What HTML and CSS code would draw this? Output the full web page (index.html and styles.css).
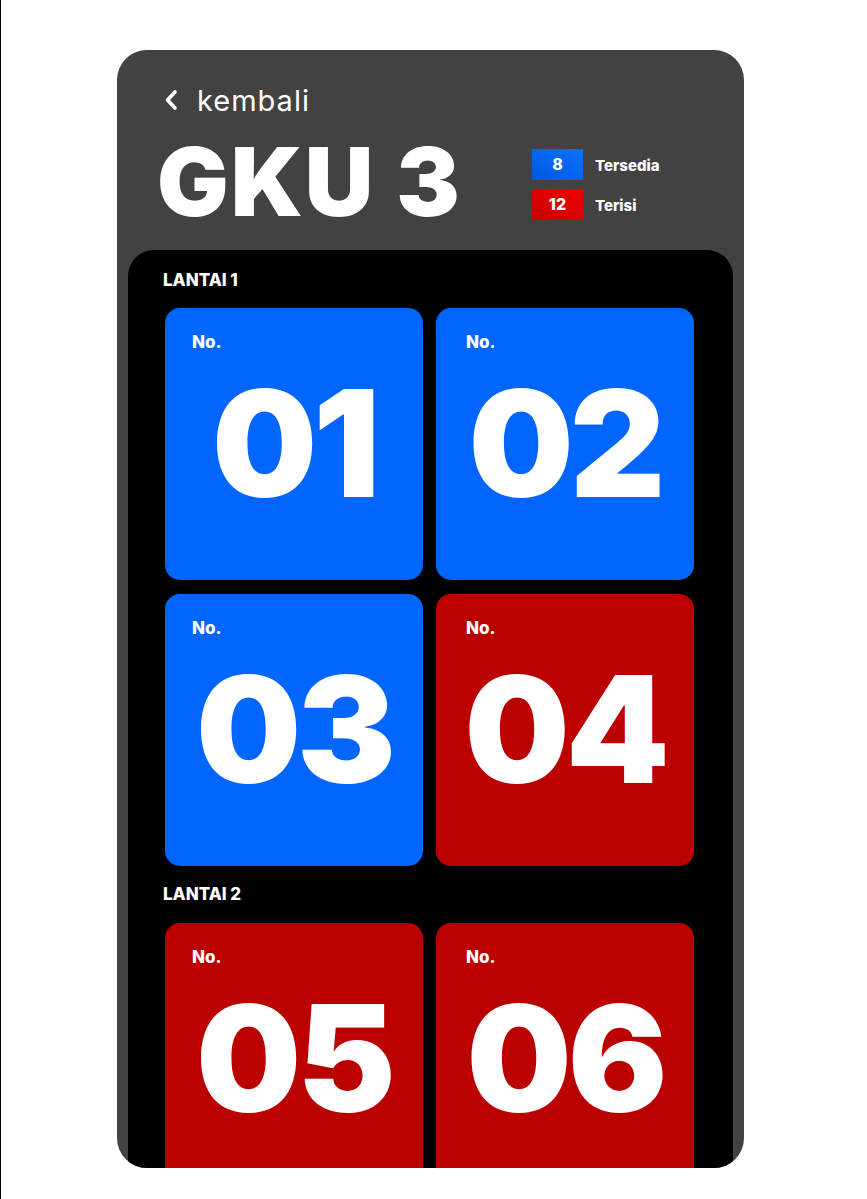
FILE: index.html
```html
<!DOCTYPE html>
<html lang="id">
<head>
    <meta charset="UTF-8">
    <meta name="viewport" content="width=device-width, initial-scale=1.0">
    <title>GKU 3</title>
    <link rel="stylesheet" href="styles.css">
</head>
<body>
    <div class="phone">
        <div class="top">
            <a class="back" href="#">
                <svg class="back-icon" width="14" height="22" viewBox="0 0 14 22">
                    <polyline points="11,3 3.5,11 11,19" fill="none" stroke="#fff" stroke-width="3.6" stroke-linecap="round" stroke-linejoin="round"/>
                </svg>
                <span>kembali</span>
            </a>
            <div class="title-row">
                <div class="title">GKU 3</div>
                <div class="legend">
                    <div class="legend-row">
                        <span class="legend-box free">8</span>
                        <span class="legend-label">Tersedia</span>
                    </div>
                    <div class="legend-row">
                        <span class="legend-box taken">12</span>
                        <span class="legend-label">Terisi</span>
                    </div>
                </div>
            </div>
        </div>
        <div class="panel">
            <div class="floor">LANTAI 1</div>
            <div class="rooms">
                <div class="room free"><span class="room-no">No.</span><span class="room-num">01</span></div>
                <div class="room free"><span class="room-no">No.</span><span class="room-num">02</span></div>
                <div class="room free"><span class="room-no">No.</span><span class="room-num">03</span></div>
                <div class="room taken"><span class="room-no">No.</span><span class="room-num">04</span></div>
            </div>
            <div class="floor">LANTAI 2</div>
            <div class="rooms">
                <div class="room taken"><span class="room-no">No.</span><span class="room-num">05</span></div>
                <div class="room taken"><span class="room-no">No.</span><span class="room-num">06</span></div>
            </div>
        </div>
    </div>
</body>
</html>
```

FILE: styles.css
```css
html, body {
    margin: 0;
    padding: 0;
    background-color: white;
}
body {
    border-left: 1px solid black;
    min-height: 1199px;
    box-sizing: border-box;
    font-family: Inter, "Noto Sans", sans-serif;
    color: white;
}
.phone {
    width: 627px;
    height: 1118px;
    margin: 50px 0 0 116px;
    background-color: #424242;
    border-radius: 30px;
    overflow: hidden;
    display: flex;
    flex-direction: column;
}
.top {
    padding: 34px 40px 0 40px;
}
.back {
    display: flex;
    align-items: center;
    height: 32px;
    margin-left: 7px;
    color: white;
    text-decoration: none;
    font-size: 29px;
    font-weight: 400;
    letter-spacing: 1px;
}
.back-icon {
    margin-right: 19px;
}
.title-row {
    display: flex;
    align-items: center;
    margin-top: 18px;
    height: 95px;
}
.title {
    flex: 0 0 375px;
    font-size: 95px;
    font-weight: 900;
    line-height: 1;
    letter-spacing: 2px;
}
.legend {
    display: flex;
    flex-direction: column;
    gap: 9px;
    padding-top: 5px;
}
.legend-row {
    display: flex;
    align-items: center;
    gap: 12px;
}
.legend-box {
    width: 51px;
    height: 31px;
    display: flex;
    align-items: center;
    justify-content: center;
    font-size: 16px;
    font-weight: 800;
}
.legend-box.free {
    background: linear-gradient(30deg, #0058e0, #0a72ff);
}
.legend-box.taken {
    background: linear-gradient(30deg, #c80000, #f00000);
}
.legend-label {
    font-size: 15px;
    font-weight: 800;
    padding-top: 3px;
}
.panel {
    flex: 1;
    margin: 21px 11px 0 11px;
    padding: 20px 39px 0 37px;
    background-color: black;
    border-radius: 26px 26px 0 0;
    overflow: hidden;
}
.floor {
    margin-left: -2px;
    font-size: 17px;
    font-weight: 800;
    line-height: 20px;
    margin-bottom: 18px;
}
.rooms + .floor {
    margin-top: 18px;
    margin-bottom: 19px;
}
.rooms {
    display: grid;
    grid-template-columns: 258px 258px;
    column-gap: 13px;
    row-gap: 14px;
}
.room {
    height: 272px;
    box-sizing: border-box;
    padding: 24px 20px 44px 27px;
    border-radius: 15px;
    display: flex;
    flex-direction: column;
}
.room:nth-child(even) .room-no {
    margin-left: 3px;
}
.room.free {
    background-color: #0066ff;
}
.room.taken {
    background-color: #bb0000;
}
.room-no {
    font-size: 17px;
    font-weight: 800;
    line-height: 20px;
}
.room-num {
    flex: 1;
    display: flex;
    align-items: center;
    justify-content: center;
    margin-left: -7px;
    font-size: 148px;
    font-weight: 900;
    line-height: 1;
    letter-spacing: -4px;
}
```
